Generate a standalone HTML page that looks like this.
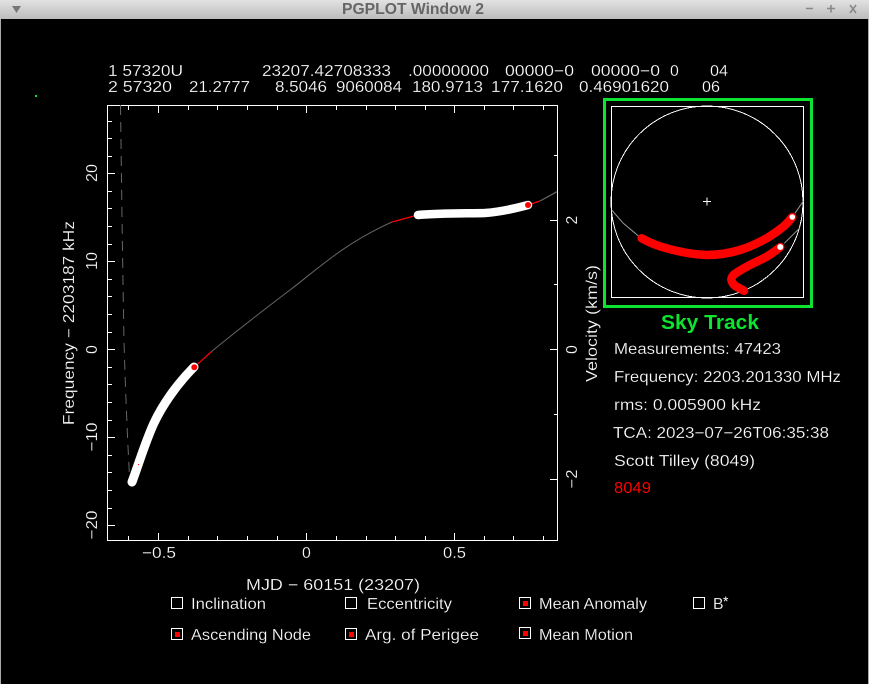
<!DOCTYPE html>
<html>
<head>
<meta charset="utf-8">
<title>PGPLOT Window 2</title>
<style>
html,body{margin:0;padding:0;background:#000;width:869px;height:684px;overflow:hidden}
svg{position:absolute;left:0;top:0;display:block}
text{font-family:"Liberation Sans",sans-serif;font-size:15.8px;fill:#fff;stroke:#000;stroke-width:.2px}
text.p{stroke:none}
</style>
</head>
<body>
<svg width="869" height="684" viewBox="0 0 869 684" xmlns="http://www.w3.org/2000/svg">
<defs>
<linearGradient id="tb" x1="0" y1="0" x2="0" y2="1"><stop offset="0" stop-color="#e2e2e2"/><stop offset="1" stop-color="#bcbcbc"/></linearGradient>
</defs>
<rect width="869" height="684" fill="#000"/>
<!-- title bar -->
<rect x="0" y="0" width="869" height="19" fill="url(#tb)"/>
<rect x="0" y="19" width="1" height="665" fill="#aaa"/>
<rect x="868" y="19" width="1" height="665" fill="#aaa"/>
<path d="M12 6h9l-4.500 7z" fill="#777"/>
<text class="p" x="342" y="14" textLength="142" lengthAdjust="spacingAndGlyphs" style="font-size:16px;font-weight:bold;fill:#666">PGPLOT Window 2</text>
<path d="M806 8.500h7M827 8.500h8M831 5v7.500M850 5l6 8M856 5l-6 8" stroke="#888" stroke-width="1.600" fill="none"/>
<rect x="35" y="95" width="2" height="2" fill="#00e52d"/>

<!-- TLE lines -->
<g>
<text x="108" y="76" textLength="75" lengthAdjust="spacingAndGlyphs">1 57320U</text>
<text x="262" y="76" textLength="129" lengthAdjust="spacingAndGlyphs">23207.42708333</text>
<text x="408" y="76" textLength="81" lengthAdjust="spacingAndGlyphs">.00000000</text>
<text x="505" y="76" textLength="69" lengthAdjust="spacingAndGlyphs">00000−0</text>
<text x="591" y="76" textLength="69" lengthAdjust="spacingAndGlyphs">00000−0</text>
<text x="670" y="76">0</text>
<text x="710" y="76" textLength="18" lengthAdjust="spacingAndGlyphs">04</text>
<text x="108" y="92" textLength="64" lengthAdjust="spacingAndGlyphs">2 57320</text>
<text x="189" y="92" textLength="61" lengthAdjust="spacingAndGlyphs">21.2777</text>
<text x="275" y="92" textLength="52" lengthAdjust="spacingAndGlyphs">8.5046</text>
<text x="336" y="92" textLength="66" lengthAdjust="spacingAndGlyphs">9060084</text>
<text x="412" y="92" textLength="71" lengthAdjust="spacingAndGlyphs">180.9713</text>
<text x="491" y="92" textLength="72" lengthAdjust="spacingAndGlyphs">177.1620</text>
<text x="579" y="92" textLength="90" lengthAdjust="spacingAndGlyphs">0.46901620</text>
<text x="702" y="92" textLength="18" lengthAdjust="spacingAndGlyphs">06</text>
</g>

<!-- plot box -->
<g shape-rendering="crispEdges" stroke="#fff" stroke-width="1" fill="none">
<rect x="107.500" y="105.500" width="450" height="435"/>
<path d="M108 173.500h7M108 261.500h7M108 349.500h7M108 437.500h7M108 525.500h7"/>
<path d="M108 121.500h4M108 138.500h4M108 156.500h4M108 191.500h4M108 208.500h4M108 226.500h4M108 244.500h4M108 279.500h4M108 296.500h4M108 314.500h4M108 332.500h4M108 367.500h4M108 384.500h4M108 402.500h4M108 420.500h4M108 455.500h4M108 472.500h4M108 490.500h4M108 508.500h4"/>
<path d="M550 220.500h7M550 349.500h7M550 479.500h7"/>
<path d="M554 155.500h3M554 284.500h3M554 414.500h3"/>
<path d="M158.500 106v7M306.500 106v7M454.500 106v7M158.500 540v-7M306.500 540v-7M454.500 540v-7"/>
<path d="M128.500 106v4M188.500 106v4M217.500 106v4M247.500 106v4M277.500 106v4M336.500 106v4M366.500 106v4M395.500 106v4M425.500 106v4M484.500 106v4M513.500 106v4M543.500 106v4"/>
<path d="M128.500 540v-4M188.500 540v-4M217.500 540v-4M247.500 540v-4M277.500 540v-4M336.500 540v-4M366.500 540v-4M395.500 540v-4M425.500 540v-4M484.500 540v-4M513.500 540v-4M543.500 540v-4"/>
</g>

<!-- curves -->
<path d="M120.500 105C121.500 180 122.500 260 124 340C125 380 127.500 440 129.500 476" fill="none" stroke="#666" stroke-width="1" stroke-dasharray="10 7"/>
<path d="M211 352C240 328 265 309 290 290C320 267 345 243 392 222" fill="none" stroke="#666" stroke-width="1"/>
<path d="M392 222L416 215.500" fill="none" stroke="#f00" stroke-width="1.200"/>
<path d="M528 205L540 201" fill="none" stroke="#f00" stroke-width="1.200"/>
<path d="M540 201L557 191.700" fill="none" stroke="#666" stroke-width="1.200"/>
<path d="M194 367.300L211 352" fill="none" stroke="#f00" stroke-width="1.200"/>
<path d="M132 482C138 466 146 440 154 423C162 406 176 385 194 367" fill="none" stroke="#fff" stroke-width="9" stroke-linecap="round"/>
<path d="M418 215C440 213 470 213.500 485 213C500 212 515 208.500 528 205" fill="none" stroke="#fff" stroke-width="8.500" stroke-linecap="round"/>
<circle cx="194.300" cy="367.200" r="3" fill="#f00"/>
<circle cx="528" cy="205" r="3" fill="#f00"/>
<rect x="138" y="464" width="1" height="1" fill="#f00"/>

<!-- axis numbers -->
<text transform="rotate(-90 97 173)" x="97" y="173" dx="-9" textLength="18" lengthAdjust="spacingAndGlyphs">20</text>
<text transform="rotate(-90 97 261)" x="97" y="261" dx="-9" textLength="18" lengthAdjust="spacingAndGlyphs">10</text>
<text transform="rotate(-90 97 349.500)" x="97" y="349.500" dx="-4.500">0</text>
<text transform="rotate(-90 97 437)" x="97" y="437" dx="-14.500" textLength="29" lengthAdjust="spacingAndGlyphs">−10</text>
<text transform="rotate(-90 97 525)" x="97" y="525" dx="-14.500" textLength="29" lengthAdjust="spacingAndGlyphs">−20</text>
<text transform="rotate(-90 74 425)" x="74" y="425" textLength="204" lengthAdjust="spacingAndGlyphs">Frequency − 2203187 kHz</text>
<text transform="rotate(-90 577 220)" x="577" y="220" dx="-4.500">2</text>
<text transform="rotate(-90 577 349.500)" x="577" y="349.500" dx="-4.500">0</text>
<text transform="rotate(-90 577 479)" x="577" y="479" dx="-9.500" textLength="19" lengthAdjust="spacingAndGlyphs">−2</text>
<text transform="rotate(-90 597 382)" x="597" y="382" textLength="117" lengthAdjust="spacingAndGlyphs">Velocity (km/s)</text>
<text x="142" y="558" textLength="34" lengthAdjust="spacingAndGlyphs">−0.5</text>
<text x="302" y="558">0</text>
<text x="443" y="558" textLength="23" lengthAdjust="spacingAndGlyphs">0.5</text>
<text x="246" y="590" textLength="174" lengthAdjust="spacingAndGlyphs">MJD − 60151 (23207)</text>

<!-- sky track -->
<rect x="604.500" y="99.500" width="207" height="207" fill="none" stroke="#0ce52f" stroke-width="2.600" shape-rendering="crispEdges"/>
<rect x="611.500" y="106.500" width="192" height="191" fill="none" stroke="#fff" stroke-width="1" shape-rendering="crispEdges"/>
<circle cx="707" cy="202" r="96" fill="none" stroke="#fff" stroke-width="1" shape-rendering="crispEdges"/>
<path d="M703 201.500h8M707 197.500v8" stroke="#fff" stroke-width="1" shape-rendering="crispEdges"/>
<path d="M611.700 210L623.300 223.300L639.300 236.700M795 213.300L803.300 201M784.300 243.300L800 227.700" fill="none" stroke="#999" stroke-width="1"/>
<path d="M641.700 238.300C650 243 658 246 666.700 248.300C680 252 693 254.500 706.700 255C719 255 730 253 740 250C750 247 758 243 766.700 238.300C773 234.500 778 231 783.300 226.700C787 223.500 790 220 792.300 217" fill="none" stroke="#f00" stroke-width="8.500" stroke-linecap="round"/>
<path d="M780.300 247C776 250.500 771 254 766.700 256.700C760 260.500 753 263 746.700 266.700C741 270 737 272 733.500 275C731 278 731 280 732 281.700C733 284.500 735 286 736.700 286.700C739 288 741.500 289.500 744 290.700" fill="none" stroke="#f00" stroke-width="8.500" stroke-linecap="round"/>
<circle cx="792.300" cy="217" r="2.800" fill="#fff"/>
<circle cx="780.300" cy="247" r="3" fill="#fff"/>
<text class="p" x="661" y="329" textLength="98" lengthAdjust="spacingAndGlyphs" style="font-size:20px;font-weight:bold;fill:#0ce52f">Sky Track</text>

<!-- info -->
<text x="614" y="354" textLength="167" lengthAdjust="spacingAndGlyphs">Measurements: 47423</text>
<text x="614" y="382" textLength="227" lengthAdjust="spacingAndGlyphs">Frequency: 2203.201330 MHz</text>
<text x="614" y="410" textLength="147" lengthAdjust="spacingAndGlyphs">rms: 0.005900 kHz</text>
<text x="613" y="438" textLength="216" lengthAdjust="spacingAndGlyphs">TCA: 2023−07−26T06:35:38</text>
<text x="614" y="466" textLength="141" lengthAdjust="spacingAndGlyphs">Scott Tilley (8049)</text>
<text class="p" x="614" y="493" textLength="37" lengthAdjust="spacingAndGlyphs" style="fill:#f00">8049</text>

<!-- checkboxes -->
<g fill="none" stroke="#fff" stroke-width="1" shape-rendering="crispEdges">
<rect x="171.500" y="597.500" width="11" height="11"/>
<rect x="345.500" y="597.500" width="11" height="11"/>
<rect x="519.500" y="597.500" width="11" height="11"/>
<rect x="693.500" y="597.500" width="11" height="11"/>
<rect x="171.500" y="628.500" width="11" height="11"/>
<rect x="345.500" y="628.500" width="11" height="11"/>
<rect x="519.500" y="627.500" width="11" height="11"/>
</g>
<g fill="#f00" shape-rendering="crispEdges">
<rect x="523" y="601" width="5" height="5"/>
<rect x="175" y="632" width="5" height="5"/>
<rect x="349" y="632" width="5" height="5"/>
<rect x="523" y="631" width="5" height="5"/>
</g>
<text x="191" y="609" textLength="75" lengthAdjust="spacingAndGlyphs">Inclination</text>
<text x="367" y="609" textLength="85" lengthAdjust="spacingAndGlyphs">Eccentricity</text>
<text x="539" y="609" textLength="108" lengthAdjust="spacingAndGlyphs">Mean Anomaly</text>
<text x="713" y="609">B</text>
<text class="p" x="723" y="606" style="font-size:14px">*</text>
<text x="191" y="640" textLength="120" lengthAdjust="spacingAndGlyphs">Ascending Node</text>
<text x="365" y="640" textLength="114" lengthAdjust="spacingAndGlyphs">Arg. of Perigee</text>
<text x="539" y="640" textLength="94" lengthAdjust="spacingAndGlyphs">Mean Motion</text>
</svg>
</body>
</html>
